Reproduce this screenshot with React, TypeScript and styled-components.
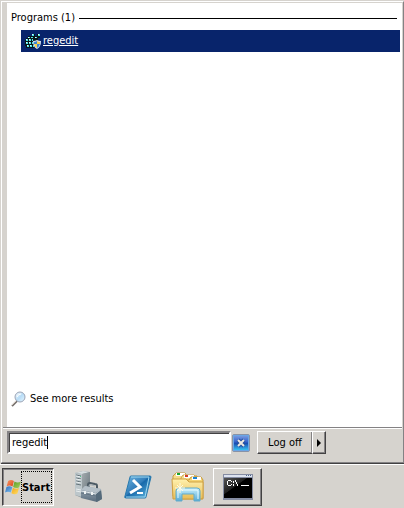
import React, { useState } from "react";
import styled, { createGlobalStyle, css } from "styled-components";

const face = "#d6d3ce";
const shadow = "#848284";
const dark = "#424142";
const navy = "#08246b";

const GlobalStyle = createGlobalStyle`
  * { box-sizing: border-box; }
  body {
    margin: 0;
    background: ${face};
    color: #000;
    font: 11px/14px "DejaVu Sans Condensed", "DejaVu Sans", sans-serif;
  }
  button, input { font: inherit; color: inherit; }
  svg { flex-shrink: 0; }
`;

const Desktop = styled.div`
  display: flex;
  flex-direction: column;
  min-height: 100vh;
`;

const StartMenu = styled.main`
  flex: 1;
  display: flex;
  flex-direction: column;
  margin-top: 1px;
  margin-left: 1px;
  border: 1px solid;
  border-color: #fff ${shadow} ${shadow} #fff;
  box-shadow: 0 1px 0 ${dark};
  padding: 1px 1px 0 1px;
`;

const Results = styled.section`
  flex: 1;
  display: flex;
  flex-direction: column;
  background: #fff;
  border-left: 4px solid ${face};
  padding: 8px 2px 20px 0;
`;

const GroupHeading = styled.h2`
  display: flex;
  align-items: center;
  gap: 4px;
  margin: 0 3px 5px 4px;
  font: inherit;
  white-space: nowrap;
  &::after {
    content: "";
    flex: 1;
    height: 1px;
    background: #000;
  }
`;

const ResultLink = styled.a`
  display: flex;
  align-items: center;
  gap: 2px;
  height: 22px;
  margin-left: 14px;
  padding-left: 4px;
  background: ${navy};
  color: #fff;
`;

const MoreLink = styled.a`
  display: flex;
  align-items: center;
  gap: 3px;
  margin: auto 0 0 4px;
  color: #000;
  text-decoration: none;
`;

const SearchBar = styled.form`
  display: flex;
  align-items: center;
  height: 35px;
  padding: 0 0 5px 4px;
  border-top: 1px solid ${shadow};
  box-shadow: inset 0 1px 0 #fff;
`;

const SearchField = styled.label`
  display: flex;
  align-items: center;
  width: 56.7%;
  height: 23px;
  padding-left: 3px;
  background: #fff;
  border: 2px solid;
  border-color: ${shadow} #fff #fff ${shadow};
  box-shadow: inset 1px 1px 0 ${dark};
`;

const SearchInput = styled.input`
  field-sizing: content;
  min-width: 1px;
  padding: 0;
  border: 0;
  outline: 0;
  background: transparent;
  caret-color: transparent;
`;

const Caret = styled.span`
  width: 1px;
  height: 13px;
  background: #000;
`;

const ClearButton = styled.button`
  display: flex;
  width: 18px;
  height: 18px;
  margin: 0 7px 0 1px;
  padding: 0;
  border: 0;
  background: none;
`;

const raised = css`
  background: ${face};
  border: 1px solid;
  border-color: #fff ${dark} ${dark} #fff;
  box-shadow: inset -1px -1px 0 ${shadow};
`;

const LogOffButton = styled.button`
  ${raised}
  width: 55px;
  height: 23px;
  padding: 0;
  border-right: 0;
`;

const ArrowButton = styled.button`
  ${raised}
  display: flex;
  align-items: center;
  justify-content: center;
  width: 14px;
  height: 23px;
  padding: 0;
`;

const Taskbar = styled.nav`
  display: flex;
  align-items: center;
  gap: 1px;
  height: 44px;
  margin-top: 1px;
  padding: 2px 2px 0 2px;
  box-shadow: inset 0 1px 0 #fff;
`;

const StartButton = styled.button`
  display: flex;
  align-items: center;
  width: 52px;
  height: 38px;
  margin-right: 8px;
  padding: 0 1px 0 2px;
  background: ${face};
  border: 1px solid;
  border-color: ${dark} #fff #fff ${dark};
  box-shadow: inset 1px 1px 0 ${shadow};
`;

const StartLabel = styled.span`
  display: flex;
  align-items: center;
  width: 31px;
  height: 32px;
  padding-top: 2px;
  overflow: hidden;
  border: 1px dotted #000;
  font-weight: bold;
`;

const TaskButton = styled.button<{ $open?: boolean }>`
  display: flex;
  align-items: center;
  justify-content: center;
  width: 49px;
  height: 38px;
  padding: 0;
  border: 0;
  background: none;
  ${(p) => p.$open && raised}
`;

const RegeditIcon = () => (
  <svg width="16" height="16" viewBox="0 0 16 16" shapeRendering="crispEdges" aria-hidden="true">
    <path d="M3 3h4V1h3v2h2V1h3v4h-2v3H9v7H1v-2H0V7h1V5h2z" fill="#08181c" />
    <path d="M3 4h2v1H3zM6 4h2v1H6zM1 6h2v2H1zM4 6h2v2H4zM7 6h1v2H7zM1 9h2v2H1zM4 9h2v2H4zM7 9h1v2H7zM2 12h2v2H2zM5 12h2v2H5zM8 12h1v2H8zM7 1h2v2H7zM13 1h2v2h-2zM10 4h2v1h-2z" fill="#4ee6e6" />
    <path d="M1 6h1v1H1zM4 6h1v1H4zM1 9h1v1H1zM4 9h1v1H4zM2 12h1v1H2zM5 12h1v1H5zM7 1h1v1H7zM13 1h1v1h-1zM3 4h1v1H3zM10 4h1v1h-1z" fill="#e2ffff" />
    <g shapeRendering="auto">
      <path d="M8 8q2 0 4-1 2 1 4 1 0 6-4 8-4-2-4-8" fill="#d6e4f6" />
      <path d="M9 9q1 0 3-1v3H9zM12 11h3q-1 3-3 4z" fill="#3b86d6" />
      <path d="M12 8q1 1 3 1v2h-3zM9 11h3v4q-2-1-3-4" fill="#f9cf4c" />
    </g>
  </svg>
);

const MagnifierIcon = () => (
  <svg width="16" height="16" viewBox="0 0 16 16" aria-hidden="true">
    <defs>
      <linearGradient id="lens" x2="1" y2="1">
        <stop stopColor="#fff" />
        <stop offset=".5" stopColor="#b8dcf6" />
        <stop offset="1" stopColor="#e8f7ff" />
      </linearGradient>
    </defs>
    <path d="M1 15l5-5" stroke="#77716d" strokeWidth="2" />
    <path d="M1 14l4-4" stroke="#d8d0c8" />
    <circle cx="9" cy="6" r="5" fill="url(#lens)" stroke="#9aa3b5" />
    <path d="M6 6q1-3 4-3" fill="none" stroke="#fff" />
  </svg>
);

const ClearIcon = () => (
  <svg width="18" height="18" viewBox="0 0 18 18" aria-hidden="true">
    <defs>
      <linearGradient id="clear" x2="0" y2="1">
        <stop stopColor="#7c9de0" />
        <stop offset=".45" stopColor="#315fca" />
        <stop offset=".5" stopColor="#1747ad" />
        <stop offset="1" stopColor="#39c9f5" />
      </linearGradient>
    </defs>
    <rect x=".5" y=".5" width="17" height="17" rx="1.5" fill="#9ec5e8" stroke="#8992a6" />
    <rect x="1.5" y="1.5" width="15" height="15" fill="url(#clear)" stroke="#6aa6e5" />
    <path d="M6 6l6 6M12 6l-6 6" stroke="#2450a0" strokeWidth="4" />
    <path d="M6 6l6 6M12 6l-6 6" stroke="#eee9e2" strokeWidth="2" />
  </svg>
);

const WindowsIcon = () => (
  <svg width="16" height="16" viewBox="0 0 16 16" aria-hidden="true">
    <defs>
      <linearGradient id="red" x2="1" y2="1">
        <stop stopColor="#f79a68" />
        <stop offset="1" stopColor="#dc4216" />
      </linearGradient>
      <linearGradient id="green" x2="1" y2="1">
        <stop stopColor="#5c9c2c" />
        <stop offset="1" stopColor="#a6d457" />
      </linearGradient>
      <linearGradient id="blue" x2="1" y2="1">
        <stop stopColor="#2f68b8" />
        <stop offset="1" stopColor="#7cc4f2" />
      </linearGradient>
      <linearGradient id="yellow" x2="1" y2="1">
        <stop stopColor="#f0a51c" />
        <stop offset="1" stopColor="#ffe167" />
      </linearGradient>
    </defs>
    <path d="M3.1 2Q6 0 8.9 2L7.5 7.4Q4.600 5.800 1.700 7.200z" fill="url(#red)" />
    <path d="M9.500 2.500Q12.500 4.500 15.800 2.500L14.200 8.200Q11.200 10 8.100 8z" fill="url(#green)" />
    <path d="M1.500 8Q4.500 6.500 7.300 8.200L5.900 13.500Q3 12 0 13.400z" fill="url(#blue)" />
    <path d="M7.900 8.800Q11 10.600 14 9L12.400 14.500Q9.500 16.200 6.400 14.200z" fill="url(#yellow)" />
  </svg>
);

const ServerIcon = () => (
  <svg width="32" height="32" viewBox="0 0 32 32" aria-hidden="true">
    <defs>
      <linearGradient id="side" x2="1" y2="1">
        <stop stopColor="#a3abae" />
        <stop offset="1" stopColor="#68757c" />
      </linearGradient>
      <linearGradient id="box" x2="0" y2="1">
        <stop stopColor="#a5b2bc" />
        <stop offset="1" stopColor="#586b7c" />
      </linearGradient>
    </defs>
    <path d="M3 2l8-2 7 1v22l-8 4-7-3z" fill="#8b979c" />
    <path d="M3 2l8-2 7 1-8 2z" fill="#d8dfe1" />
    <path d="M10 3l8-2v22l-8 3z" fill="url(#side)" />
    <path d="M3 2l7 1v23l-7-2z" fill="#bcc6ca" />
    <path d="M4 4l5 1M4 7l5 1M4 10l5 1M4 13l5 1" stroke="#65747a" />
    <path d="M4 5l5 1M4 8l5 1M4 11l5 1M4 18l5 1M4 20l5 1" stroke="#e7eced" />
    <path d="M8 5h1v1H8z" fill="#55c78a" />
    <path d="M16 17v-3q0-2 2-2l5 1q2 0 2 2v3" fill="none" stroke="#4d5b65" strokeWidth="2" />
    <path d="M17 15q0-2 2-1l4 1" fill="none" stroke="#a8b3ba" />
    <path d="M9 19l4-4 16 3 1 10-5 3-16-4z" fill="url(#box)" />
    <path d="M9 19l4-4 16 3-5 4z" fill="#b5c0c8" />
    <path d="M9 20l15 3 5-4" fill="none" stroke="#e0e7ea" />
    <path d="M24 23v8l6-3-1-9z" fill="#556a7a" />
    <path d="M9 22l15 3" stroke="#657685" />
    <path d="M13 20v3M20 21v3" stroke="#eef2f3" strokeWidth="2" />
  </svg>
);

const PowerShellIcon = () => (
  <svg width="28" height="24" viewBox="0 0 28 24" aria-hidden="true">
    <defs>
      <linearGradient id="shell" x2="1" y2="1">
        <stop stopColor="#71b9e5" />
        <stop offset=".45" stopColor="#347fbb" />
        <stop offset=".5" stopColor="#1769aa" />
        <stop offset="1" stopColor="#66bde5" />
      </linearGradient>
    </defs>
    <path d="M7 1h19q1 0 1 1l-5 20q0 1-1 1H2q-2 0-1-2L6 2q0-1 1-1z" fill="url(#shell)" stroke="#2879ad" />
    <path d="M7 2h18l-4 20H2" fill="none" stroke="#9dd7ef" />
    <path d="M9 5l7 7-10 6" fill="none" stroke="#fff" strokeWidth="3" />
    <path d="M13 18h6" stroke="#fff" strokeWidth="2" />
  </svg>
);

const ExplorerIcon = () => (
  <svg width="34" height="32" viewBox="0 0 34 32" aria-hidden="true">
    <defs>
      <linearGradient id="folder" x2="0" y2="1">
        <stop stopColor="#fff1ae" />
        <stop offset="1" stopColor="#e8bd57" />
      </linearGradient>
      <linearGradient id="stand" x2="0" y2="1">
        <stop stopColor="#c9f0fb" />
        <stop offset="1" stopColor="#55a9d5" />
      </linearGradient>
    </defs>
    <path d="M2 5l3-3h9l2 3h10v20H2z" fill="#f6dc8b" stroke="#c69b40" />
    <path d="M5 2h9v3H5z" fill="#fff" />
    <path d="M6 2h3v2H6z" fill="#16a530" />
    <path d="M10 7l2-3h11l2 3h4v18H10z" fill="#f7df91" stroke="#cca550" />
    <path d="M13 4h10v3H13z" fill="#fff" />
    <path d="M14 4h3v2h-3z" fill="#d23c28" />
    <path d="M18 9l2-3h10l2 3v19H8V9z" fill="#f4d473" stroke="#c99a37" />
    <path d="M21 6h9v3h-9z" fill="#fff" />
    <path d="M22 6h4v2h-4z" fill="#1c83d2" />
    <path d="M1 8h14l3 3h14v16l-2 1H2z" fill="url(#folder)" stroke="#cfa145" />
    <path d="M5 30V20q0-3 3-3h18q3 0 3 3v10h-6v-7H11v7z" fill="url(#stand)" stroke="#62abc9" />
    <path d="M7 27v-7q0-1 2-1h16q2 0 2 1v8" fill="none" stroke="#e6faff" />
    <path d="M9 12v10M4 17h10M6 14l6 6M12 14l-6 6" stroke="#fffbe2" />
  </svg>
);

const ConsoleIcon = () => (
  <svg width="30" height="26" viewBox="0 0 30 26" aria-hidden="true">
    <defs>
      <linearGradient id="screen" x2="1" y2="1">
        <stop stopColor="#555" />
        <stop offset=".4" stopColor="#202020" />
        <stop offset=".42" stopColor="#000" />
      </linearGradient>
    </defs>
    <path d="M0 0h30v26H0z" fill="#858ca2" />
    <path d="M1 1h28v2H1z" fill="#dce2ef" />
    <path d="M23 1h1v1h-1zM25 1h1v1h-1zM27 1h1v1h-1z" fill="#4a668b" />
    <path d="M1 4h28v20H1z" fill="url(#screen)" />
    <g fill="#fff" shapeRendering="crispEdges">
      <path d="M5 6h3v1H5zM4 7h1v4H4zM8 7h1v1H8zM8 10h1v1H8zM5 11h3v1H5z" />
      <path d="M10 7h1v2h-1zM10 10h1v2h-1z" />
      <path d="M12 6h1v2h-1zM13 8h1v2h-1zM14 10h1v2h-1zM18 11h8v1h-8z" />
    </g>
  </svg>
);

export default function App() {
  const [query, setQuery] = useState("regedit");

  return (
    <>
      <GlobalStyle />
      <Desktop>
        <StartMenu>
          <Results>
            <GroupHeading>Programs (1)</GroupHeading>
            <ResultLink href="#regedit">
              <RegeditIcon />
              regedit
            </ResultLink>
            <MoreLink href="#results">
              <MagnifierIcon />
              See more results
            </MoreLink>
          </Results>
          <SearchBar onSubmit={(e) => e.preventDefault()}>
            <SearchField>
              <SearchInput
                aria-label="Search programs and files"
                value={query}
                onChange={(e) => setQuery(e.target.value)}
              />
              <Caret />
            </SearchField>
            <ClearButton type="button" aria-label="Clear search" onClick={() => setQuery("")}>
              <ClearIcon />
            </ClearButton>
            <LogOffButton type="button">Log off</LogOffButton>
            <ArrowButton type="button" aria-label="More log off options">
              <svg width="4" height="8" viewBox="0 0 4 8" aria-hidden="true">
                <path d="M0 0l4 4-4 4z" />
              </svg>
            </ArrowButton>
          </SearchBar>
        </StartMenu>
        <Taskbar>
          <StartButton type="button">
            <WindowsIcon />
            <StartLabel>Start</StartLabel>
          </StartButton>
          <TaskButton type="button" aria-label="Server Manager">
            <ServerIcon />
          </TaskButton>
          <TaskButton type="button" aria-label="PowerShell">
            <PowerShellIcon />
          </TaskButton>
          <TaskButton type="button" aria-label="Explorer">
            <ExplorerIcon />
          </TaskButton>
          <TaskButton type="button" aria-label="Command Prompt" $open>
            <ConsoleIcon />
          </TaskButton>
        </Taskbar>
      </Desktop>
    </>
  );
}
